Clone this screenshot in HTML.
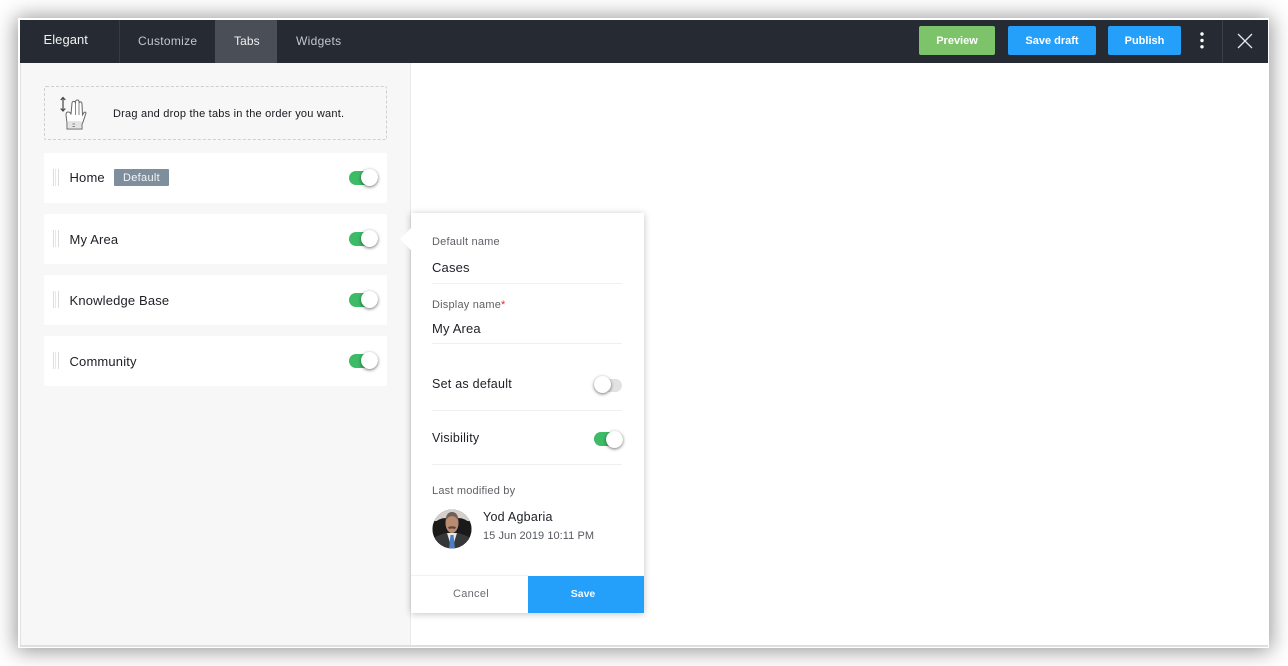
<!DOCTYPE html>
<html>
<head>
<meta charset="utf-8">
<style>
html,body{margin:0;padding:0;width:1288px;height:666px;overflow:hidden;background:#fff;font-family:"Liberation Sans",sans-serif;color:#1c1f26}
*{box-sizing:border-box}
.a{position:absolute;white-space:nowrap}
#frame{left:18px;top:18px;width:1251px;height:630px;background:#fff;box-shadow:0 1px 20px 2px rgba(0,0,0,.42)}
#inner{left:20px;top:20px;width:1248px;height:626px;background:#fff}
#bar{left:20px;top:20px;width:1248px;height:43px;background:#252a33}
#side{left:20px;top:63px;width:391px;height:583px;background:#f7f7f7;border-right:1px solid #e9e9e9;border-left:1px solid #e2e2e2}
#bottom{left:20px;top:645px;width:1248px;height:2px;background:#dfdfdf}
.nav{font-size:12px;color:#c4c7cb;letter-spacing:.3px;line-height:14px}
.btn{top:26px;height:29px;border-radius:2px;color:#fff;font-size:11px;font-weight:bold;letter-spacing:0;text-align:center;line-height:30px}
.card{left:44px;width:343px;height:50px;background:#fff;border-radius:2px}
.grip{left:53px;width:6px;height:17px;border-left:1px solid #ddd;border-right:1px solid #ddd}
.grip:after{content:"";position:absolute;left:1px;top:0;width:1px;height:17px;background:#e8e8e8}
.lbl{font-size:13px;letter-spacing:.16px;line-height:16px;color:#1c1f26}
.sw{width:29px;height:14px;border-radius:7px;background:#3dbb67}
.sw.off{background:#e2e2e2;height:13px}
.knob{width:17px;height:17px;border-radius:50%;background:#fff;box-shadow:0 1px 3px rgba(0,0,0,.55)}
.small{font-size:11px;color:#5f6166;letter-spacing:.2px;line-height:13px}
.sep{left:432px;width:190px;height:1px;background:#f0f0f0}
</style>
</head>
<body>
<div class="a" id="frame"></div>
<div class="a" id="inner"></div>
<div class="a" id="bar"></div>
<div class="a" id="side"></div>
<div class="a" id="bottom"></div>

<div class="a" style="left:119px;top:20px;width:1px;height:43px;background:#363a43"></div>
<div class="a" style="left:215px;top:20px;width:62px;height:43px;background:#4a4e56"></div>
<div class="a" style="left:1222px;top:20px;width:1px;height:43px;background:#3b3f48"></div>

<div class="a" style="left:43.500px;top:32px;font-size:13px;color:#f2f2f2;letter-spacing:.05px;line-height:16px">Elegant</div>
<div class="a nav" style="left:138px;top:34px">Customize</div>
<div class="a nav" style="left:234px;top:34px;color:#f0f0f0;letter-spacing:.1px">Tabs</div>
<div class="a nav" style="left:296px;top:34px">Widgets</div>

<div class="a btn" style="left:919px;width:76px;background:#7cc36a">Preview</div>
<div class="a btn" style="left:1008px;width:88px;background:#24a0fb">Save draft</div>
<div class="a btn" style="left:1108px;width:73px;background:#24a0fb">Publish</div>

<svg class="a" style="left:1194.500px;top:30px" width="14" height="22" viewBox="0 0 14 22">
<circle cx="7" cy="4" r="1.7" fill="#fff"/><circle cx="7" cy="10.500" r="1.7" fill="#fff"/><circle cx="7" cy="16.800" r="1.7" fill="#fff"/>
</svg>
<svg class="a" style="left:1236px;top:32px" width="18" height="18" viewBox="0 0 18 18">
<path d="M2 2L16 16M16 2L2 16" stroke="#e6e7e8" stroke-width="1.3" fill="none"/>
</svg>

<div class="a" style="left:44px;top:86px;width:343px;height:54px;border:1px dashed #cfcfcf;border-radius:2px"></div>
<svg class="a" style="left:56px;top:94px" width="34" height="38" viewBox="0 0 34 38" fill="none" stroke="#666" stroke-width="1">
<path d="M7 3.500V17M4.700 6L7 3.500L9.300 6M4.700 14.500L7 17L9.300 14.500" stroke="#444" stroke-width="1.200"/>
<path d="M11 35V29L10 21Q10 18 12 18Q14.500 18 15 20.500L16 9Q16.500 7 18 7.500Q19.500 7.500 19.500 9.500V7.500Q20 6 21.500 6Q23 6 23 8V9Q23.500 7.500 25 8Q26 8.500 26 10L26.500 21L28 18.500Q29.500 17.500 30 19L27 28L26 30V35Z" fill="#fff"/>
<path d="M12 27L25.500 27L25 34H12Z" fill="#e4e4e4" stroke="none"/>
<path d="M19.500 9V21M23 9V21M16.500 30H19M16.500 32.500H19" stroke-width=".8"/>
</svg>
<div class="a" style="left:113px;top:107px;font-size:11px;letter-spacing:.22px;line-height:14px;color:#17191d">Drag and drop the tabs in the order you want.</div>

<div class="a card" style="top:153px"></div>
<div class="a card" style="top:214px"></div>
<div class="a card" style="top:275px"></div>
<div class="a card" style="top:336px"></div>
<div class="a grip" style="top:169px"></div>
<div class="a grip" style="top:230px"></div>
<div class="a grip" style="top:291px"></div>
<div class="a grip" style="top:352px"></div>

<div class="a lbl" style="left:69.500px;top:170px">Home</div>
<div class="a" style="left:114px;top:169px;width:55px;height:17px;background:#7f8e9c;border-radius:1px;color:#f4f5f6;font-size:11px;letter-spacing:.3px;text-align:center;line-height:18px">Default</div>
<div class="a lbl" style="left:69.500px;top:232px">My Area</div>
<div class="a lbl" style="left:69.500px;top:293px">Knowledge Base</div>
<div class="a lbl" style="left:69.500px;top:354px">Community</div>

<div class="a sw" style="left:349px;top:171px"></div><div class="a knob" style="left:361px;top:169px"></div>
<div class="a sw" style="left:349px;top:232px"></div><div class="a knob" style="left:361px;top:230px"></div>
<div class="a sw" style="left:349px;top:293px"></div><div class="a knob" style="left:361px;top:291px"></div>
<div class="a sw" style="left:349px;top:354px"></div><div class="a knob" style="left:361px;top:352px"></div>

<div class="a" style="left:411px;top:213px;width:233px;height:400px;background:#fff;box-shadow:0 1px 7px rgba(0,0,0,.24)"></div>
<div class="a" style="left:400px;top:228px;width:0;height:0;border-top:11px solid transparent;border-bottom:11px solid transparent;border-right:11px solid #fff"></div>

<div class="a small" style="left:432px;top:236px">Default name</div>
<div class="a lbl" style="left:432px;top:260px">Cases</div>
<div class="a sep" style="top:283px"></div>
<div class="a small" style="left:432px;top:299px">Display name<span style="color:#e0293a">*</span></div>
<div class="a lbl" style="left:432px;top:321px">My Area</div>
<div class="a sep" style="top:343px"></div>
<div class="a lbl" style="left:432px;top:376px;font-size:12.500px;letter-spacing:.25px">Set as default</div>
<div class="a sw off" style="left:594px;top:379px;width:28px"></div><div class="a knob" style="left:594px;top:376px"></div>
<div class="a sep" style="top:410px"></div>
<div class="a lbl" style="left:432px;top:430px;font-size:12.500px;letter-spacing:.25px">Visibility</div>
<div class="a sw" style="left:594px;top:432px"></div><div class="a knob" style="left:606px;top:431px"></div>
<div class="a sep" style="top:464px"></div>
<div class="a small" style="left:432px;top:485px">Last modified by</div>

<svg class="a" style="left:432px;top:509px" width="40" height="40" viewBox="0 0 40 40">
<defs><clipPath id="c"><circle cx="20" cy="20" r="19.500"/></clipPath></defs>
<g clip-path="url(#c)">
<rect width="40" height="40" fill="#2a2726"/>
<rect x="0" y="0" width="40" height="12" fill="#d5d0cc"/>
<path d="M0 16Q6 9 14 9H26Q34 9 40 16V32H0Z" fill="#1b1a1a"/>
<path d="M0 40V30Q6 26 14 24H26Q34 26 40 30V40Z" fill="#363739"/>
<path d="M15 24L20 40L25 24Z" fill="#e8e8ea"/>
<path d="M18.500 26H21.500L23 40H17Z" fill="#4a7fc4"/>
<ellipse cx="20" cy="14" rx="6.500" ry="10" fill="#b98c72"/>
<path d="M13.500 12Q14 3 20 3Q26 3 26.500 12Q24 7 20 7Q16 7 13.500 12Z" fill="#6e6058"/>
<path d="M16 18Q20 16.500 24 18L23 20Q20 19 17 20Z" fill="#5c473d"/>
</g>
</svg>
<div class="a lbl" style="left:483px;top:509px;font-size:12.500px;letter-spacing:.25px">Yod Agbaria</div>
<div class="a" style="left:483px;top:529px;font-size:11px;color:#55585e;letter-spacing:.06px;line-height:14px">15 Jun 2019 10:11 PM</div>

<div class="a" style="left:411px;top:575px;width:117px;height:1px;background:#f1f1f1"></div>
<div class="a small" style="left:411px;top:588px;width:120px;text-align:center;color:#6b6d72;letter-spacing:.3px">Cancel</div>
<div class="a" style="left:528px;top:576px;width:110px;height:37px;color:#f3f9ff;z-index:2;font-size:10.500px;font-weight:bold;text-align:center;line-height:36px">Save</div>
<div class="a" style="left:528px;top:576px;width:116px;height:37px;background:#24a0fb"></div>
</body>
</html>
